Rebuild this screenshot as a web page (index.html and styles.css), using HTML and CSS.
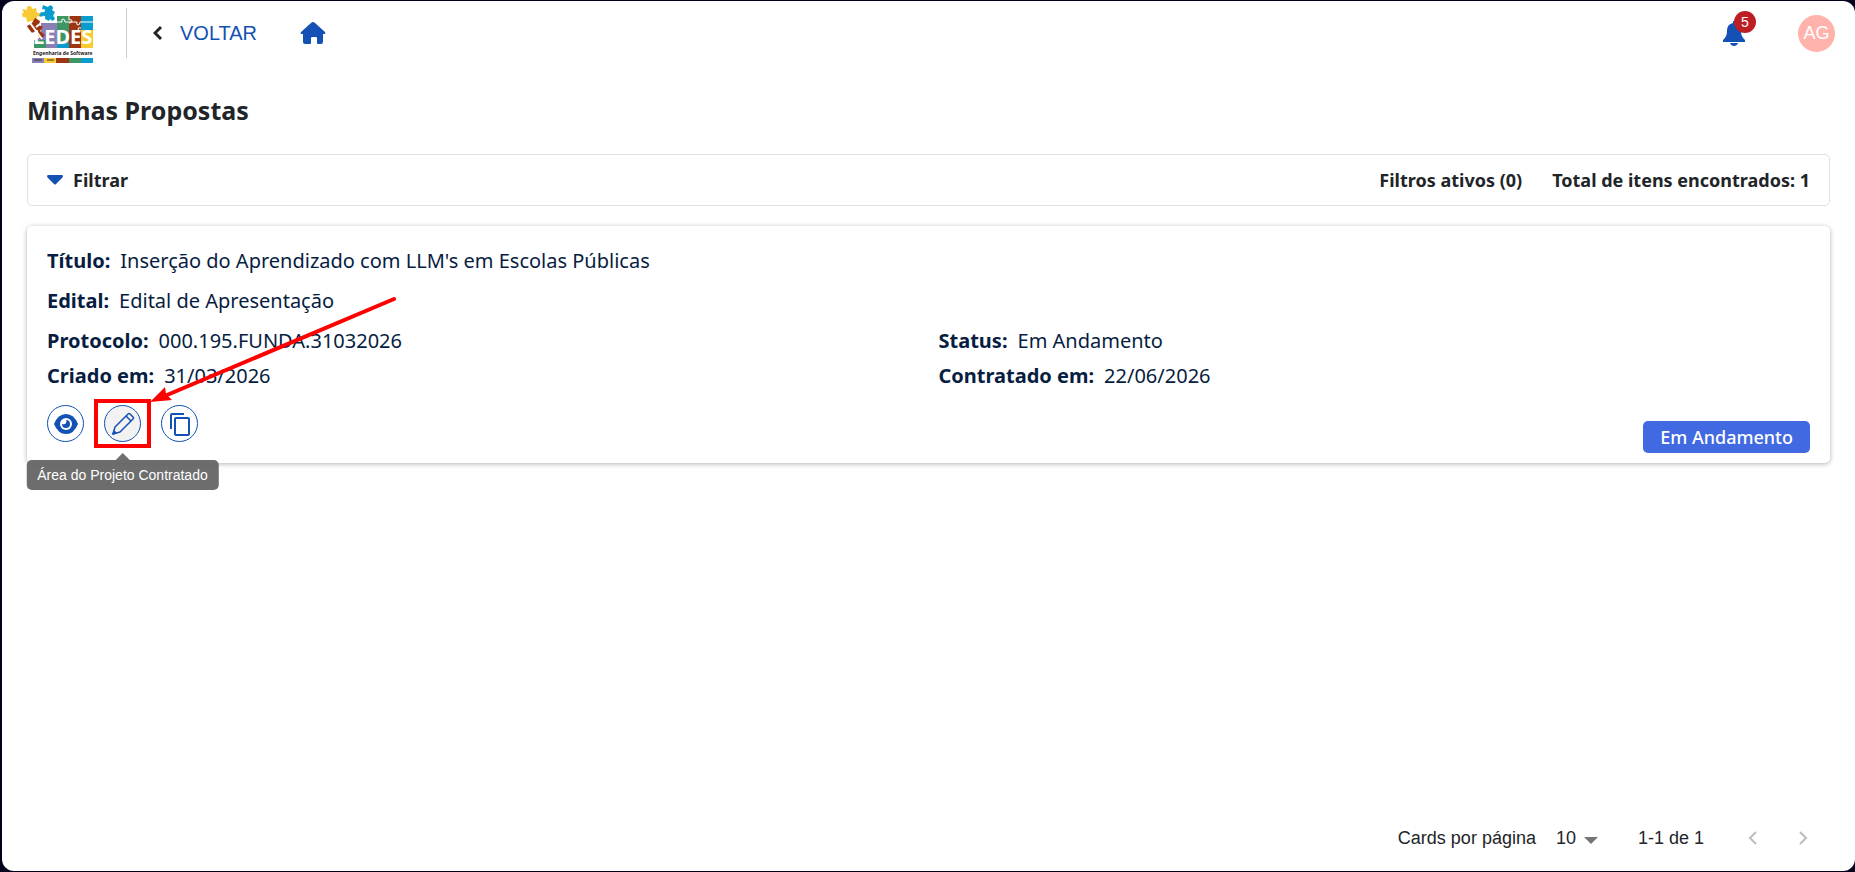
FILE: index.html
```html
<!DOCTYPE html>
<html lang="pt-BR">

<head>
    <meta charset="UTF-8">
    <meta name="viewport" content="width=device-width, initial-scale=1.0">
    <title>Minhas Propostas</title>
    <link rel="stylesheet" href="styles.css">
</head>

<body>
    <div class="window">
        <header class="topbar">
            <a href="#" class="logo" aria-label="LEDES Engenharia de Software">
                <svg width="76" height="60" viewBox="0 0 76 60">
                    <path d="M19 20h16v25H12v-8l7-3z" fill="#8a80b5" />
                    <rect x="35" y="13" width="12" height="32" fill="#3c9764" />
                    <rect x="47" y="13" width="12" height="32" fill="#9c3510" />
                    <rect x="59" y="13" width="12" height="15" fill="#0a9bcf" />
                    <rect x="59" y="27" width="12" height="18" fill="#f8cb35" />
                    <path d="M12 37h12v8H12z" fill="#3c9764" />
                    <path d="M35 40h12v5H35z" fill="#0a9bcf" />
                    <path d="M0 6l5 1q-1-4 2-4t3 3l4-1 1 5q4-1 3 2t-3 1v4l-10 2-1-5q-4 1-4-2t2-2z" fill="#f8cb35" />
                    <path d="M21 2l5 2q2-3 4-1t0 4l3 2-2 4q3 2 1 4t-4-1l-1 2-4-2q1-4-2-3t-1 1l-3-1 2-4q3 1 4-1t-3-2z" fill="#0a9bcf" />
                    <path d="M5 23l5-3 3-5 5 3-1 4 4 2-3 4 5 4-4 4-6-7-5 1z" fill="#9c3510" />
                    <path d="M8 20l12 16M5 25l9 12M14 24l4-3" stroke="#fff" stroke-width="2" />
                    <path d="M35 19h5q-1-3 1-3t2 3h12q-1 3 1 3t2-3h13M47 13v4q3-1 3 1t-3 2M59 25q-3-1-3 1t3 2" fill="none" stroke="#fff" />
                    <text x="11" y="41" class="logo-name">LEDES</text>
                    <text x="11" y="52" class="logo-sub">Engenharia de Software</text>
                    <rect x="10" y="55" width="12" height="5" fill="#8a80b5" />
                    <rect x="22" y="55" width="12" height="5" fill="#f8cb35" />
                    <rect x="34" y="55" width="13" height="5" fill="#9c3510" />
                    <rect x="47" y="55" width="12" height="5" fill="#3c9764" />
                    <rect x="59" y="55" width="12" height="5" fill="#0a9bcf" />
                    <path d="M12 57h8M25 57h7" stroke="#333" />
                </svg>
            </a>
            <a href="#" class="back">
                <svg width="10" height="16" viewBox="0 0 10 16">
                    <path d="M8 2L2 8l6 6" fill="none" stroke="#212529" stroke-width="3" />
                </svg>
                VOLTAR
            </a>
            <a href="#" class="home" aria-label="Início">
                <svg width="26" height="24" viewBox="0 0 26 24">
                    <path d="M13 1q1 0 2 1l10 9q1 2-1 2h-1v8q0 2-2 2h-3q-1 0-1-1v-5q0-1-1-1h-4q-1 0-1 1v5q0 1-1 1H5q-2 0-2-2v-8H2q-2 0-1-2l10-9q1-1 2-1z" fill="#1351b4" />
                </svg>
            </a>
            <button class="bell" aria-label="Notificações">
                <svg width="24" height="26" viewBox="0 0 24 26">
                    <path d="M11 1h2v2q6 1 6 8 0 6 4 9v2H1v-2q4-3 4-9 0-7 6-8z" fill="#1351b4" />
                    <path d="M8 23h8q-1 3-4 3t-4-3z" fill="#1351b4" />
                </svg>
                <span class="bell-count">5</span>
            </button>
            <button class="avatar">AG</button>
        </header>

        <main>
            <h1>Minhas Propostas</h1>

            <section class="filter">
                <button class="filter-toggle">
                    <svg width="16" height="10" viewBox="0 0 16 10">
                        <path d="M1 0h14q2 1 0 3L9 9q-1 1-2 0L1 3q-2-2 0-3z" fill="#1351b4" />
                    </svg>
                    Filtrar
                </button>
                <div class="filter-info">
                    <span>Filtros ativos (0)</span>
                    <span>Total de itens encontrados: 1</span>
                </div>
            </section>

            <article class="card">
                <dl class="fields">
                    <div class="field wide">
                        <dt>Título:</dt>
                        <dd>Inserção do Aprendizado com LLM's em Escolas Públicas</dd>
                    </div>
                    <div class="field wide">
                        <dt>Edital:</dt>
                        <dd>Edital de Apresentação</dd>
                    </div>
                    <div class="field">
                        <dt>Protocolo:</dt>
                        <dd>000.195.FUNDA.31032026</dd>
                    </div>
                    <div class="field">
                        <dt>Status:</dt>
                        <dd>Em Andamento</dd>
                    </div>
                    <div class="field">
                        <dt>Criado em:</dt>
                        <dd>31/03/2026</dd>
                    </div>
                    <div class="field">
                        <dt>Contratado em:</dt>
                        <dd>22/06/2026</dd>
                    </div>
                </dl>
                <div class="card-footer">
                    <div class="actions">
                        <button class="action" aria-label="Visualizar">
                            <svg width="26" height="20" viewBox="0 0 26 20">
                                <path d="M1 10Q5 0 13 0t12 10q-4 10-12 10T1 10z" fill="#1351b4" />
                                <circle cx="13" cy="10" r="6" fill="#fff" />
                                <path d="M13 6a4 4 0 1 1-4 4q3 1 4-1t0-3z" fill="#1351b4" />
                            </svg>
                        </button>
                        <div class="highlight">
                            <button class="action active" aria-label="Editar" aria-describedby="tip">
                                <svg width="24" height="24" viewBox="0 0 24 24" fill="none" stroke="#1351b4" stroke-width="1.5" stroke-linejoin="round">
                                    <path d="M2 22l2-7L17 2q1-1 2 0l3 3q1 1 0 2L9 20z" />
                                    <path d="M15 4l5 5" />
                                    <path d="M2 22l1-3 2 2z" fill="#1351b4" />
                                </svg>
                            </button>
                            <svg class="arrow" width="248" height="110" viewBox="0 0 248 110">
                                <path d="M245 3L18 99" stroke="#f00" stroke-width="4" stroke-linecap="round" />
                                <path d="M1 106l15-15 1 7 6 6z" fill="#f00" />
                            </svg>
                            <div class="tooltip" id="tip" role="tooltip">Área do Projeto Contratado</div>
                        </div>
                        <button class="action" aria-label="Copiar">
                            <svg width="22" height="24" viewBox="0 0 22 24" fill="none" stroke="#1351b4" stroke-width="2">
                                <path d="M2 17V3q0-1 1-1h12" />
                                <rect x="6" y="6" width="14" height="17" rx="1" />
                            </svg>
                        </button>
                    </div>
                    <span class="status">Em Andamento</span>
                </div>
            </article>
        </main>

        <footer class="pagination">
            <label for="per-page">Cards por página</label>
            <div class="select">
                <select id="per-page">
                    <option>10</option>
                    <option>20</option>
                    <option>50</option>
                </select>
                <svg width="14" height="7" viewBox="0 0 14 7">
                    <path d="M0 0h14L7 7z" fill="#757575" />
                </svg>
            </div>
            <span class="range">1-1 de 1</span>
            <button class="page" aria-label="Página anterior" disabled>
                <svg width="10" height="16" viewBox="0 0 10 16">
                    <path d="M8 2L2 8l6 6" />
                </svg>
            </button>
            <button class="page" aria-label="Próxima página" disabled>
                <svg width="10" height="16" viewBox="0 0 10 16">
                    <path d="M2 2l6 6-6 6" />
                </svg>
            </button>
        </footer>
    </div>
</body>

</html>
```
FILE: styles.css
```css
* {
    box-sizing: border-box;
}

body {
    margin: 0;
    padding: 1px 0 1px 2px;
    background: #02021a;
    color: #212529;
    font-family: "Noto Sans", sans-serif;
}

button {
    padding: 0;
    border: none;
    background: none;
    color: inherit;
    font: inherit;
    cursor: pointer;
}

svg {
    display: block;
}

.window {
    display: flex;
    flex-direction: column;
    min-height: calc(100vh - 2px);
    background: #fff;
    border-radius: 12px;
}

/* Top bar */

.topbar {
    display: flex;
    align-items: center;
    height: 64px;
    padding: 0 20px;
    font-family: "Liberation Sans", Arial, sans-serif;
}

.logo {
    padding-right: 28px;
}

.logo-name {
    fill: #fff;
    font: bold 20px "Noto Sans", sans-serif;
}

.logo-sub {
    fill: #222;
    font: bold 5px "Noto Sans", sans-serif;
}

.back {
    display: flex;
    align-items: center;
    gap: 17px;
    height: 50px;
    padding-left: 26px;
    border-left: 1px solid #ccc;
    color: #1351b4;
    font-size: 20px;
    text-decoration: none;
}

.home {
    margin-left: 43px;
}

.bell {
    position: relative;
    margin-left: auto;
}

.bell-count {
    position: absolute;
    top: -9px;
    left: 12px;
    width: 22px;
    height: 22px;
    border-radius: 50%;
    background: #bd1e24;
    color: #fff;
    font-size: 14px;
    line-height: 22px;
}

.avatar {
    width: 37px;
    height: 37px;
    margin-left: 52px;
    border-radius: 50%;
    background: #ffb3ab;
    color: #fff;
    font-size: 18px;
}

/* Content */

main {
    flex: 1;
    padding: 27px 25px 0;
}

h1 {
    margin: 0 0 26px;
    font-size: 25px;
    line-height: 36px;
}

.filter {
    display: flex;
    align-items: center;
    justify-content: space-between;
    height: 52px;
    margin-bottom: 20px;
    padding: 0 19px;
    border: 1px solid #dee0e2;
    border-radius: 5px;
    font-size: 18px;
    font-weight: bold;
}

.filter-toggle {
    display: flex;
    align-items: center;
    gap: 10px;
}

.filter-info {
    display: flex;
    gap: 30px;
}

.card {
    padding: 17px 20px 10px;
    border-radius: 5px;
    box-shadow: 0 1px 5px rgba(0, 0, 0, 0.3);
}

.fields {
    display: grid;
    grid-template-columns: 1fr 1fr;
    column-gap: 20px;
    margin: 0;
    color: #071d41;
    font-size: 20px;
    line-height: 35px;
}

.field {
    display: flex;
    gap: 10px;
}

.field.wide {
    grid-column: span 2;
    margin-bottom: 5px;
}

dt {
    font-weight: bold;
}

dd {
    margin: 0;
}

.card-footer {
    display: flex;
    align-items: flex-end;
    justify-content: space-between;
    margin-top: 6px;
}

.actions {
    display: flex;
    align-items: center;
    gap: 10px;
    margin-bottom: 5px;
}

.action {
    display: flex;
    align-items: center;
    justify-content: center;
    width: 37px;
    height: 37px;
    border: 1px solid #1351b4;
    border-radius: 50%;
}

.action.active {
    background: #f2f2f2;
}

.highlight {
    position: relative;
    padding: 2px 6px;
    border: 4px solid #f00;
}

.arrow {
    position: absolute;
    left: 51px;
    bottom: 38px;
    z-index: 1;
}

.tooltip {
    position: absolute;
    top: 57px;
    left: 50%;
    transform: translateX(-50%);
    padding: 0 11px;
    border-radius: 5px;
    background: rgba(97, 97, 97, 0.92);
    color: #fff;
    font: 14px/30px "Liberation Sans", Arial, sans-serif;
    white-space: nowrap;
}

.tooltip::before {
    content: "";
    position: absolute;
    bottom: 100%;
    left: 50%;
    margin-left: -7px;
    border: 7px solid transparent;
    border-top: none;
    border-bottom-color: #707070;
}

.status {
    padding: 0 17px;
    border-radius: 5px;
    background: #4169e1;
    color: #fff;
    font-size: 18px;
    font-weight: 500;
    line-height: 32px;
}

/* Pagination */

.pagination {
    display: flex;
    align-items: center;
    justify-content: flex-end;
    height: 66px;
    padding-right: 27px;
    font: 18px "Liberation Sans", Arial, sans-serif;
}

.select {
    position: relative;
    margin: 0 40px 0 20px;
}

.select select {
    appearance: none;
    width: 42px;
    padding: 0;
    border: none;
    background: none;
    color: inherit;
    font: inherit;
}

.select svg {
    position: absolute;
    top: 9px;
    right: 0;
    pointer-events: none;
}

.range {
    margin-right: 24px;
}

.page {
    display: flex;
    align-items: center;
    justify-content: center;
    width: 50px;
    height: 50px;
}

.page path {
    fill: none;
    stroke: #bdbdbd;
    stroke-width: 2;
}
```
